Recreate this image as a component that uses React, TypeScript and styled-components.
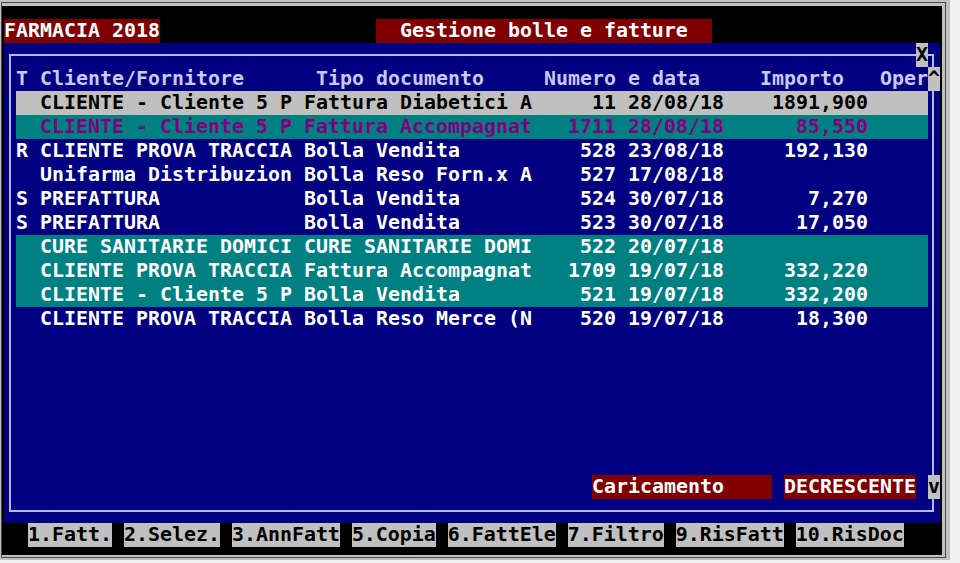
import styled, { createGlobalStyle } from "styled-components";

const COL = 12;
const LINE = 24;

const GlobalStyle = createGlobalStyle`
  html, body {
    margin: 0;
    padding: 0;
    background: #f0f0f0;
  }
  * {
    box-sizing: border-box;
  }
`;

const OuterFrame = styled.div`
  width: fit-content;
  border-style: solid;
  border-color: #c0c0c0;
  border-width: 2px 4px 2px 1px;
`;
const MiddleFrame = styled.div`
  border: 1px solid #4a4a4a;
`;
const InnerFrame = styled.div`
  border-style: solid;
  border-color: #c0c0c0;
  border-width: 3px 3px 2px 0;
`;
const Screen = styled.div`
  width: 940px;
  background: #000;
  padding: 13px 2px 8px 2px;
  font-family: "DejaVu Sans Mono", "Liberation Mono", monospace;
  font-weight: bold;
  font-size: 19.93px;
  line-height: ${LINE}px;
  white-space: pre;
  color: #fff;
`;
const TitleRow = styled.div`
  display: flex;
  height: ${LINE}px;
`;
const RedBar = styled.div<{ $cols: number; $pad?: number; $at?: number }>`
  width: ${(p) => p.$cols * COL}px;
  margin-left: ${(p) => (p.$at ?? 0) * COL}px;
  padding-left: ${(p) => (p.$pad ?? 0) * COL}px;
  height: ${LINE}px;
  background: #800000;
  color: #fff;
`;
const Panel = styled.div`
  position: relative;
  display: flex;
  flex-direction: column;
  height: ${20 * LINE}px;
  background: #000080;
  &::before {
    content: "";
    position: absolute;
    top: 11px;
    left: 5px;
    right: 6px;
    bottom: 11px;
    border: 2px solid #b8b8e8;
    pointer-events: none;
  }
`;
const PanelRow = styled.div<{ $lead?: number }>`
  position: relative;
  z-index: 1;
  display: flex;
  height: ${LINE}px;
  padding-left: ${(p) => (p.$lead ?? 1) * COL}px;
`;
const StatusRow = styled(PanelRow)`
  margin-top: auto;
  margin-bottom: ${LINE}px;
`;
const ScrollBox = styled.div<{ $at?: number }>`
  width: ${COL}px;
  height: ${LINE}px;
  margin-left: ${(p) => (p.$at ?? 0) * COL}px;
  background: #c0c0c0;
  color: #000;
  text-align: center;
`;
const HeadCell = styled.div<{ $cols: number }>`
  width: ${(p) => p.$cols * COL}px;
  color: #c8c8f0;
`;
const Records = styled.div`
  display: flex;
  flex-direction: column;
`;
type Tone = "plain" | "gray" | "teal" | "tealPurple";
const toneBg: Record<Tone, string> = {
  plain: "transparent",
  gray: "#c0c0c0",
  teal: "#008080",
  tealPurple: "#008080",
};
const toneFg: Record<Tone, string> = {
  plain: "#ffffff",
  gray: "#000000",
  teal: "#ffffff",
  tealPurple: "#800080",
};
const RecordLine = styled.div<{ $tone: Tone }>`
  display: flex;
  width: ${76 * COL}px;
  height: ${LINE}px;
  background: ${(p) => toneBg[p.$tone]};
  color: ${(p) => toneFg[p.$tone]};
`;
const Cell = styled.div<{ $cols: number; $right?: boolean; $gap?: number }>`
  width: ${(p) => p.$cols * COL}px;
  margin-right: ${(p) => (p.$gap ?? 0) * COL}px;
  text-align: ${(p) => (p.$right ? "right" : "left")};
  overflow: hidden;
`;
const KeyRow = styled.div`
  display: flex;
  gap: ${COL}px;
  height: ${LINE}px;
  padding-left: ${2 * COL}px;
`;
const FKey = styled.div`
  background: #c0c0c0;
  color: #000;
`;

type Doc = {
  flag: string;
  who: string;
  kind: string;
  num: string;
  date: string;
  amount: string;
  tone: Tone;
};

const docs: Doc[] = [
  { flag: "", who: "CLIENTE - Cliente 5 P", kind: "Fattura Diabetici A", num: "11", date: "28/08/18", amount: "1891,900", tone: "gray" },
  { flag: "", who: "CLIENTE - Cliente 5 P", kind: "Fattura Accompagnat", num: "1711", date: "28/08/18", amount: "85,550", tone: "tealPurple" },
  { flag: "R", who: "CLIENTE PROVA TRACCIA", kind: "Bolla Vendita", num: "528", date: "23/08/18", amount: "192,130", tone: "plain" },
  { flag: "", who: "Unifarma Distribuzion", kind: "Bolla Reso Forn.x A", num: "527", date: "17/08/18", amount: "", tone: "plain" },
  { flag: "S", who: "PREFATTURA", kind: "Bolla Vendita", num: "524", date: "30/07/18", amount: "7,270", tone: "plain" },
  { flag: "S", who: "PREFATTURA", kind: "Bolla Vendita", num: "523", date: "30/07/18", amount: "17,050", tone: "plain" },
  { flag: "", who: "CURE SANITARIE DOMICI", kind: "CURE SANITARIE DOMI", num: "522", date: "20/07/18", amount: "", tone: "teal" },
  { flag: "", who: "CLIENTE PROVA TRACCIA", kind: "Fattura Accompagnat", num: "1709", date: "19/07/18", amount: "332,220", tone: "teal" },
  { flag: "", who: "CLIENTE - Cliente 5 P", kind: "Bolla Vendita", num: "521", date: "19/07/18", amount: "332,200", tone: "teal" },
  { flag: "", who: "CLIENTE PROVA TRACCIA", kind: "Bolla Reso Merce (N", num: "520", date: "19/07/18", amount: "18,300", tone: "plain" },
];

const keys = ["1.Fatt.", "2.Selez.", "3.AnnFatt", "5.Copia", "6.FattEle", "7.Filtro", "9.RisFatt", "10.RisDoc"];

export default function App() {
  return (
    <>
      <GlobalStyle />
      <OuterFrame>
        <MiddleFrame>
          <InnerFrame>
            <Screen>
              <TitleRow>
                <RedBar $cols={13}>FARMACIA 2018</RedBar>
                <RedBar $cols={28} $pad={2} $at={18}>
                  Gestione bolle e fatture
                </RedBar>
              </TitleRow>
              <Panel>
                <PanelRow $lead={76}>
                  <ScrollBox>X</ScrollBox>
                </PanelRow>
                <PanelRow>
                  <HeadCell $cols={2}>T</HeadCell>
                  <HeadCell $cols={23}>Cliente/Fornitore</HeadCell>
                  <HeadCell $cols={19}>Tipo documento</HeadCell>
                  <HeadCell $cols={18}>Numero e data</HeadCell>
                  <HeadCell $cols={10}>Importo</HeadCell>
                  <HeadCell $cols={4}>Oper</HeadCell>
                  <ScrollBox>^</ScrollBox>
                </PanelRow>
                <Records>
                  {docs.map((d, i) => (
                    <PanelRow key={i}>
                      <RecordLine $tone={d.tone}>
                        <Cell $cols={2}>{d.flag}</Cell>
                        <Cell $cols={22}>{d.who}</Cell>
                        <Cell $cols={20}>{d.kind}</Cell>
                        <Cell $cols={6} $right $gap={1}>
                          {d.num}
                        </Cell>
                        <Cell $cols={8}>{d.date}</Cell>
                        <Cell $cols={12} $right>
                          {d.amount}
                        </Cell>
                        <Cell $cols={5} />
                      </RecordLine>
                    </PanelRow>
                  ))}
                </Records>
                <StatusRow $lead={49}>
                  <RedBar $cols={15}>Caricamento</RedBar>
                  <RedBar $cols={11} $at={1}>
                    DECRESCENTE
                  </RedBar>
                  <ScrollBox $at={1}>v</ScrollBox>
                </StatusRow>
              </Panel>
              <KeyRow>
                {keys.map((k) => (
                  <FKey key={k}>{k}</FKey>
                ))}
              </KeyRow>
            </Screen>
          </InnerFrame>
        </MiddleFrame>
      </OuterFrame>
    </>
  );
}
